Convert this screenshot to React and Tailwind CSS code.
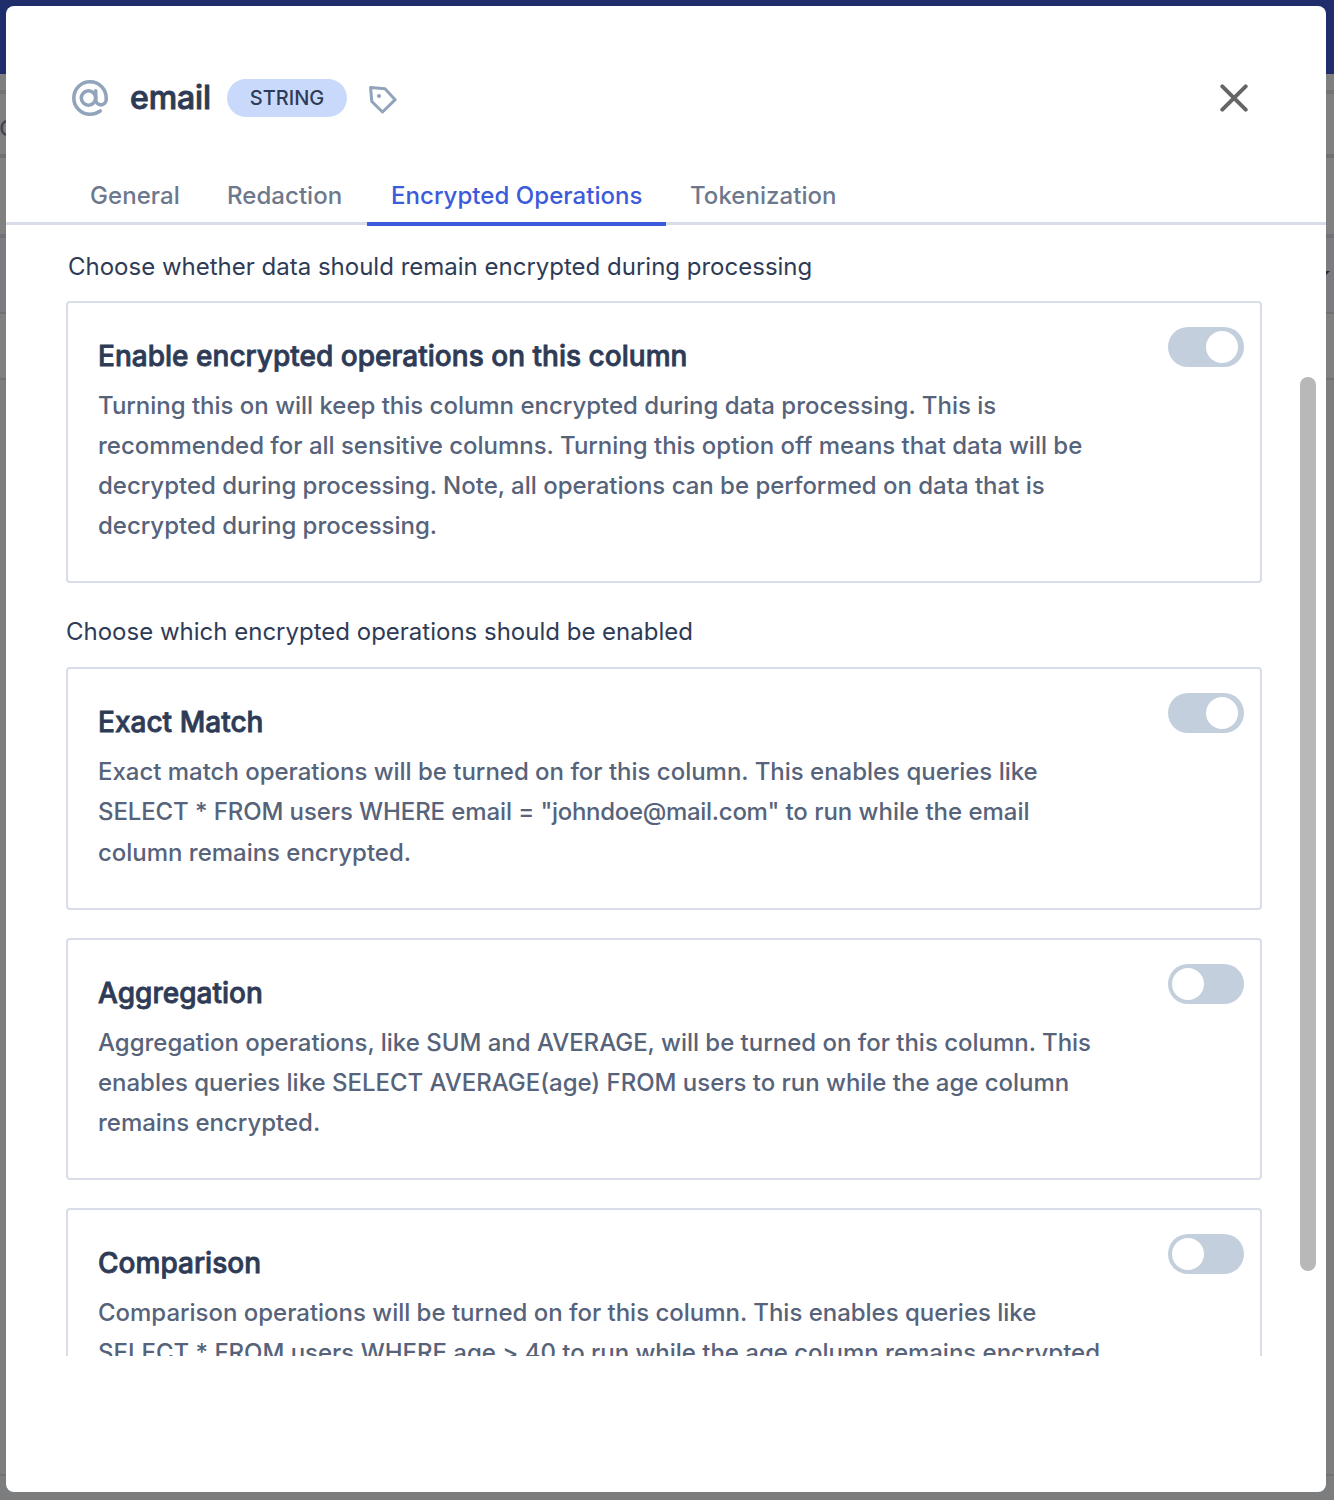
import React from "react";

const rows = [
  "h-[74px] bg-[#1f2d6b]",
  "h-4 bg-[#7e807d]",
  "h-1 bg-[#737478]",
  "h-[60px] bg-[#808080]",
  "h-1 bg-[#707174]",
  "h-[76px] bg-[#808080]",
  "h-1 bg-[#717276]",
  "h-[74px] bg-[#7b7c7f]",
  "h-0.5 bg-[#6f7074]",
  "h-16 bg-[#80807f]",
  "h-0.5 bg-[#6f7074]",
  "h-[1094px] bg-[#7d7f7c]",
  "h-0.5 bg-[#717276]",
  "h-6 bg-[#7c7d7e]",
];

function Toggle({ on }) {
  return (
    <span className={`mt-6 flex h-10 w-[76px] shrink-0 items-center rounded-full bg-[#c4cfde] ${on ? "justify-end pr-[6px]" : "pl-1"}`}>
      <span className="size-8 rounded-full bg-white" />
    </span>
  );
}

function Card({ title, lines, on, className }) {
  return (
    <section className={`flex justify-between rounded-[4px] border-2 border-[#d9dde9] pl-[30px] pr-4 ${className}`}>
      <div>
        <h2 className="mt-[33px] text-[28px] font-medium leading-10 tracking-[0.02px] text-[#2e3b56] [-webkit-text-stroke:0.8px_#2e3b56]">{title}</h2>
        <p className="mt-[10px] whitespace-nowrap text-[24px] font-medium leading-10 tracking-[-0.02px] text-[#56637a]">
          {lines.map((l, i) => (
            <span key={i} className="block">{l}</span>
          ))}
        </p>
      </div>
      <Toggle on={on} />
    </section>
  );
}

export default function App() {
  return (
    <div className="relative h-[1500px] w-[1334px] overflow-hidden font-['Inter',sans-serif]">
      <div className="flex flex-col">
        {rows.map((r, i) => (
          <div key={i} className={r} />
        ))}
      </div>
      <span className="absolute left-[-1px] top-[108px] text-[28px] leading-9 text-[#3f4654]">o</span>
      <svg className="absolute left-[1310px] top-[271px]" width="20" height="10" viewBox="0 0 20 10">
        <path d="M0 0h20L10 10z" fill="#232b3d" />
      </svg>

      <div className="absolute left-[6px] top-[6px] flex h-[1486px] w-[1320px] flex-col rounded-lg bg-white">
        <header className="flex h-[164px] items-center pl-[66px] pr-[78px] pt-5">
          <svg width="36" height="36" viewBox="0 0 36 36" fill="none" stroke="#91a4bc" strokeWidth="3.6" strokeLinecap="round" strokeLinejoin="round">
            <circle cx="16.5" cy="18" r="7.2" />
            <path d="M23.7 10.8V19.6a5.2 5.2 0 0 0 10.5 0V18A16.2 16.2 0 1 0 18 34.2C21.8 34.2 25.3 33 28.2 31" />
          </svg>
          <h1 className="ml-[22px] w-[81px] text-[32px] font-medium leading-10 tracking-[-0.1px] text-[#2e3b56] [-webkit-text-stroke:0.9px_#2e3b56]">email</h1>
          <span className="ml-4 flex h-[38px] w-[120px] items-center justify-center rounded-full bg-[#c9d9fc] text-[20px] font-medium text-[#2e3b56]">STRING</span>
          <svg className="ml-[22px] mt-[3px]" width="28" height="28" viewBox="0 0 28 28" fill="none" stroke="#91a4bc" strokeWidth="3" strokeLinejoin="round">
            <path d="M1.6 1.6L16 2.8L26.2 13.7L13.5 26L2.8 15.5z" />
            <circle cx="10" cy="10" r="2.1" fill="#91a4bc" stroke="none" />
          </svg>
          <svg className="ml-auto" width="28" height="28" viewBox="0 0 28 28" stroke="#666" strokeWidth="4" strokeLinecap="round">
            <path d="M2.3 2.3L25.7 25.7M25.7 2.3L2.3 25.7" />
          </svg>
        </header>
        <nav className="flex h-[55px] items-start border-b-[3px] border-[#d9dde9] pl-[60px] text-[24px] font-medium leading-[40px] tracking-[0.05px] text-[#6d788c]">
          <span className="w-[137px] pl-6 pt-1.5">General</span>
          <span className="w-[164px] pl-6 pt-1.5">Redaction</span>
          <span className="h-[56px] w-[299px] border-b-4 border-[#3b5bdb] pl-6 pt-1.5 text-[#3b5bdb]">Encrypted Operations</span>
          <span className="pl-6 pt-1.5">Tokenization</span>
        </nav>
        <div className="flex h-[1131px] justify-between overflow-hidden pl-[60px] pr-[10px]">
          <div className="w-[1196px] text-[24px] leading-8 text-[#2e3b56]">
            <p className="ml-0.5 mt-[26px] h-[50px]">Choose whether data should remain encrypted during processing</p>
            <Card
              on
              className="h-[282px]"
              title="Enable encrypted operations on this column"
              lines={[
                "Turning this on will keep this column encrypted during data processing. This is",
                "recommended for all sensitive columns. Turning this option off means that data will be",
                "decrypted during processing. Note, all operations can be performed on data that is",
                "decrypted during processing.",
              ]}
            />
            <p className="mt-[33px] h-[51px]">Choose which encrypted operations should be enabled</p>
            <Card
              on
              className="h-[243px]"
              title="Exact Match"
              lines={[
                "Exact match operations will be turned on for this column. This enables queries like",
                <>
                  <span className="tracking-[-0.1px]">SELECT * FROM users WHERE email = </span>
                  <span className="tracking-[-0.3px]">"johndoe@mail.com"</span> to run while the email
                </>,
                <span className="block pt-px">column remains encrypted.</span>,
              ]}
            />
            <Card
              className="mt-7 h-[242px]"
              title="Aggregation"
              lines={[
                "Aggregation operations, like SUM and AVERAGE, will be turned on for this column. This",
                "enables queries like SELECT AVERAGE(age) FROM users to run while the age column",
                "remains encrypted.",
              ]}
            />
            <Card
              className="mt-7 h-[242px]"
              title="Comparison"
              lines={[
                "Comparison operations will be turned on for this column. This enables queries like",
                "SELECT * FROM users WHERE age > 40 to run while the age column remains encrypted.",
              ]}
            />
          </div>
          <div className="mt-[152px] h-[894px] w-4 rounded-full bg-[#b8b8b8]" />
        </div>
      </div>
    </div>
  );
}
